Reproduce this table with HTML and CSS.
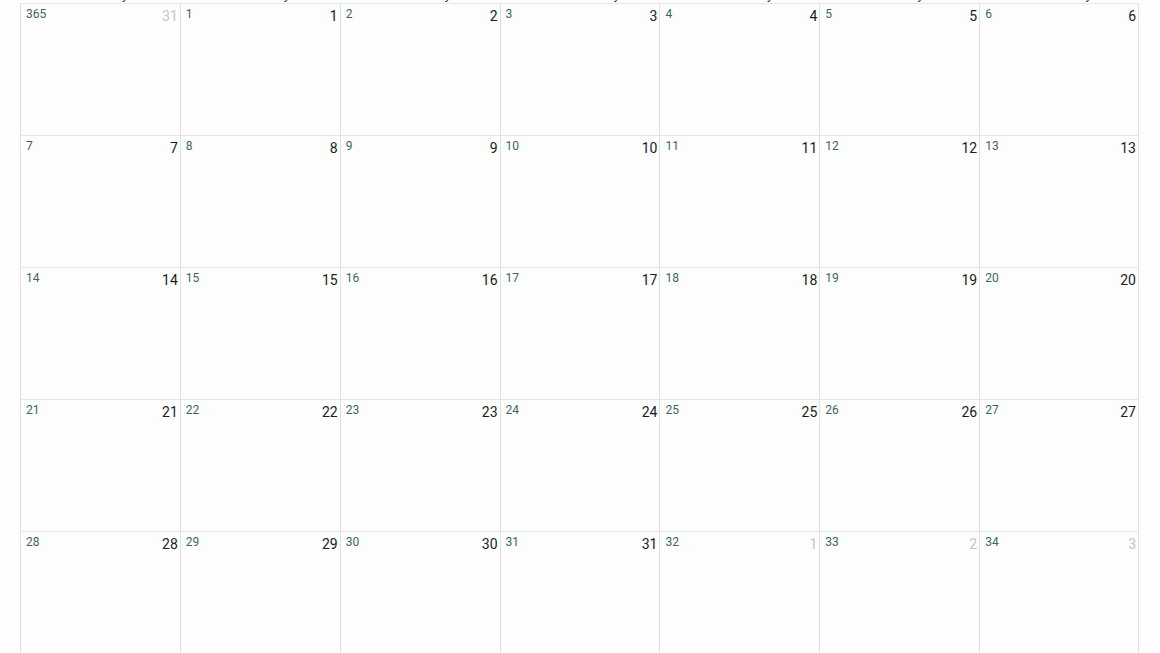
FILE: index.html
```html
<!DOCTYPE html>
<html>
<head>
<meta charset="utf-8">
<link rel="stylesheet" href="styles.css">
</head>
<body>
<div class="month">
  <div class="head">
    <div class="dn">Sunday</div><div class="dn">Monday</div><div class="dn">Tuesday</div><div class="dn">Wednesday</div><div class="dn">Thursday</div><div class="dn">Friday</div><div class="dn">Saturday</div>
  </div>
  <div class="grid">
    <div class="cell"><span class="doy">365</span><span class="dom other">31</span></div>
    <div class="cell"><span class="doy">1</span><span class="dom">1</span></div>
    <div class="cell"><span class="doy">2</span><span class="dom">2</span></div>
    <div class="cell"><span class="doy">3</span><span class="dom">3</span></div>
    <div class="cell"><span class="doy">4</span><span class="dom">4</span></div>
    <div class="cell"><span class="doy">5</span><span class="dom">5</span></div>
    <div class="cell last"><span class="doy">6</span><span class="dom">6</span></div>

    <div class="cell"><span class="doy">7</span><span class="dom">7</span></div>
    <div class="cell"><span class="doy">8</span><span class="dom">8</span></div>
    <div class="cell"><span class="doy">9</span><span class="dom">9</span></div>
    <div class="cell"><span class="doy">10</span><span class="dom">10</span></div>
    <div class="cell"><span class="doy">11</span><span class="dom">11</span></div>
    <div class="cell"><span class="doy">12</span><span class="dom">12</span></div>
    <div class="cell last"><span class="doy">13</span><span class="dom">13</span></div>

    <div class="cell"><span class="doy">14</span><span class="dom">14</span></div>
    <div class="cell"><span class="doy">15</span><span class="dom">15</span></div>
    <div class="cell"><span class="doy">16</span><span class="dom">16</span></div>
    <div class="cell"><span class="doy">17</span><span class="dom">17</span></div>
    <div class="cell"><span class="doy">18</span><span class="dom">18</span></div>
    <div class="cell"><span class="doy">19</span><span class="dom">19</span></div>
    <div class="cell last"><span class="doy">20</span><span class="dom">20</span></div>

    <div class="cell"><span class="doy">21</span><span class="dom">21</span></div>
    <div class="cell"><span class="doy">22</span><span class="dom">22</span></div>
    <div class="cell"><span class="doy">23</span><span class="dom">23</span></div>
    <div class="cell"><span class="doy">24</span><span class="dom">24</span></div>
    <div class="cell"><span class="doy">25</span><span class="dom">25</span></div>
    <div class="cell"><span class="doy">26</span><span class="dom">26</span></div>
    <div class="cell last"><span class="doy">27</span><span class="dom">27</span></div>

    <div class="cell"><span class="doy">28</span><span class="dom">28</span></div>
    <div class="cell"><span class="doy">29</span><span class="dom">29</span></div>
    <div class="cell"><span class="doy">30</span><span class="dom">30</span></div>
    <div class="cell"><span class="doy">31</span><span class="dom">31</span></div>
    <div class="cell"><span class="doy">32</span><span class="dom other">1</span></div>
    <div class="cell"><span class="doy">33</span><span class="dom other">2</span></div>
    <div class="cell last"><span class="doy">34</span><span class="dom other">3</span></div>
  </div>
</div>
</body>
</html>
```

FILE: styles.css
```css
html, body {
  margin: 0;
  padding: 0;
  background: #fdfdfd;
  overflow: hidden;
  font-family: Roboto, "Liberation Sans", sans-serif;
}

.month {
  margin: -22px 21px 0 20px;
}

.head {
  display: grid;
  grid-template-columns: repeat(7, 1fr);
  height: 25px;
}

.dn {
  display: flex;
  align-items: flex-end;
  justify-content: center;
  font-size: 13px;
  line-height: 14px;
  padding: 0 0 1px 14px;
  color: #333;
}

.grid {
  display: grid;
  grid-template-columns: repeat(7, 1fr);
  grid-auto-rows: 132px;
}

.cell {
  display: flex;
  justify-content: space-between;
  align-items: flex-start;
  border-top: 1px solid #e6e6e6;
  border-left: 1px solid #e0e0e0;
  padding: 0 2px 0 5px;
}

.cell.last {
  border-right: 1px solid #e0e0e0;
}

.doy {
  font-size: 12px;
  line-height: 16px;
  margin-top: 2px;
  color: #3b6660;
}

.dom {
  font-size: 14px;
  line-height: 18px;
  margin-top: 3px;
  color: #1c1c1c;
}

.dom.other {
  color: #c4c4c4;
}
```
